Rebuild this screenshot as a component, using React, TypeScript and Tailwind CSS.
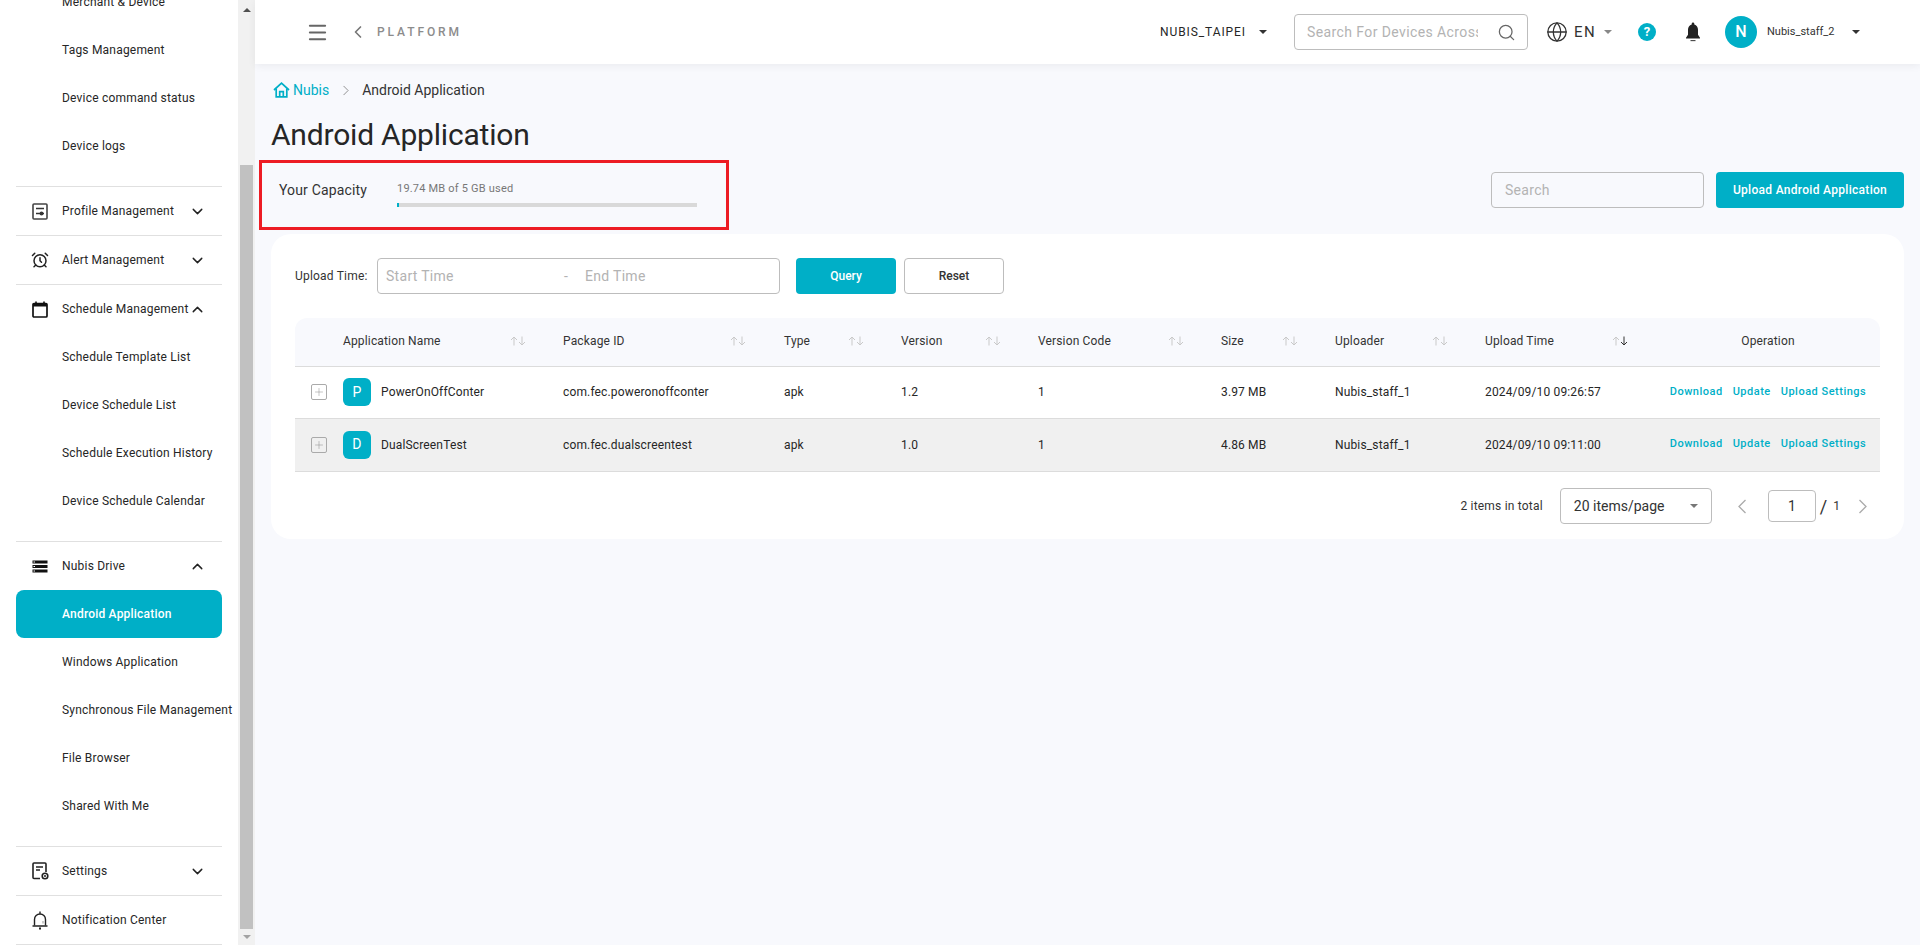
import React from "react";
import { ChevronDown, ChevronUp, AlarmClock, Search, Globe, Menu, ChevronLeft, Plus } from "lucide-react";

const IconProfile = () => (
  <svg width="16" height="17" viewBox="0 0 16 17" fill="none">
    <rect x="1" y="1" width="14" height="15" rx="1" stroke="#444" strokeWidth="1.6" />
    <path d="M4 5.5h8M4 10.5h8" stroke="#333" strokeWidth="1.3" />
    <circle cx="9.5" cy="10.5" r="1.9" fill="#333" />
  </svg>
);
const IconCalendar = () => (
  <svg width="16" height="17" viewBox="0 0 16 17" fill="none">
    <rect x="1" y="2.5" width="14" height="13.5" rx="1" stroke="#111" strokeWidth="1.7" />
    <rect x="1" y="2.5" width="14" height="3" fill="#111" />
    <path d="M4 0.5v3M12 0.5v3" stroke="#111" strokeWidth="1.6" />
  </svg>
);
const IconServer = () => (
  <svg width="16" height="13" viewBox="0 0 16 13" fill="#111">
    <rect x="0.5" y="0.5" width="15" height="3" />
    <rect x="0.5" y="5" width="15" height="3" />
    <rect x="0.5" y="9.5" width="15" height="3" />
    <path d="M1.5 2h1.5M1.5 6.5h1.5M1.5 11h1.5" stroke="#fff" strokeWidth="1" />
  </svg>
);
const IconSettingsDoc = () => (
  <svg width="17" height="18" viewBox="0 0 17 18" fill="none">
    <path d="M8 16.5H2a1 1 0 0 1-1-1V2a1 1 0 0 1 1-1h11a1 1 0 0 1 1 1v8" stroke="#222" strokeWidth="1.6" />
    <path d="M4 5h7M4 8h4" stroke="#222" strokeWidth="1.5" />
    <circle cx="13" cy="14" r="2.8" stroke="#222" strokeWidth="1.6" />
    <circle cx="13" cy="14" r="1" fill="#222" />
  </svg>
);
const IconBellOutline = () => (
  <svg width="16" height="19" viewBox="0 0 16 19" fill="none">
    <path d="M8 .5v2.2M2.5 14.5V8.5a5.5 5.5 0 0 1 11 0v6" stroke="#222" strokeWidth="1.4" />
    <path d="M.5 15h15" stroke="#222" strokeWidth="1.5" />
    <path d="M7 17.6h2" stroke="#222" strokeWidth="2" />
    <path d="M11 10v2.5" stroke="#999" strokeWidth="1" />
  </svg>
);
const IconBellFilled = () => (
  <svg width="18" height="20" viewBox="0 0 18 20" fill="#222">
    <path d="M9 .5a1.3 1.3 0 0 1 1.3 1.3v.6c2.4.7 3.7 2.8 3.7 5.3v5l2 3v.8H2v-.8l2-3v-5c0-2.5 1.3-4.6 3.7-5.3v-.6A1.3 1.3 0 0 1 9 .5Z" />
    <path d="M6.5 18.6h5" stroke="#444" strokeWidth="1.1" />
  </svg>
);
const IconHome = () => (
  <svg width="17" height="16" viewBox="0 0 17 16" fill="none" stroke="#00afc7" strokeWidth="1.7">
    <path d="M1 8 8.5 1.2 16 8" />
    <path d="M3.2 6.5v8.4h10.6V6.5" />
    <path d="M6.7 14.9V9.6h3.6v5.3" />
  </svg>
);
const Chevron = ({ dir, color }: { dir: "l" | "r"; color: string }) => (
  <svg width="10" height="15" viewBox="0 0 10 15" fill="none" stroke={color} strokeWidth="1.3">
    <path d={dir === "l" ? "M8.5 1 2 7.5 8.5 14" : "M1.5 1 8 7.5 1.5 14"} />
  </svg>
);
const SortIcon = ({ active }: { active?: boolean }) => (
  <svg width="16" height="10" viewBox="0 0 16 10" fill="none" strokeWidth="1">
    <path d="M4 9.5V1M1 4l3-3 3 3" stroke="#c9c9c9" />
    <path d="M12 .5V9M9 6l3 3 3-3" stroke={active ? "#333" : "#c9c9c9"} />
  </svg>
);
const Caret = ({ color = "#333" }: { color?: string }) => (
  <span className="inline-block w-0 h-0 border-x-[4px] border-x-transparent border-t-[4px]" style={{ borderTopColor: color }} />
);

const Sub = ({ label, active }: { label: string; active?: boolean }) => (
  <div className={`h-12 ml-4 w-[206px] flex items-center pl-[46px] whitespace-nowrap rounded-lg ${active ? "bg-[#00afc7] text-white font-medium" : "text-[#262626]"}`}>
    {label}
  </div>
);
const Group = ({ icon, label, open, arrow = true }: { icon: React.ReactNode; label: string; open?: boolean; arrow?: boolean }) => (
  <div className="h-[49px] ml-4 w-[206px] border-t border-[#e0e0e0] flex items-center text-[#262626]">
    <span className="w-[46px] flex justify-center pl-[2px]">{icon}</span>
    <span className="whitespace-nowrap w-[127px] shrink-0">{label}</span>
    {arrow && (open ? <ChevronUp size={17} strokeWidth={2} className="text-[#222]" /> : <ChevronDown size={17} strokeWidth={2} className="text-[#222]" />)}
  </div>
);

const COLS = "grid grid-cols-[48px_220px_221px_117px_137px_183px_114px_150px_171px_224px]";
const heads: [string, number][] = [
  ["Application Name", 37],
  ["Package ID", 38],
  ["Type", 37],
  ["Version", 37],
  ["Version Code", 37],
  ["Size", 37],
  ["Uploader", 37],
];
const rows = [
  { l: "P", n: "PowerOnOffConter", id: "com.fec.poweronoffconter", t: "apk", v: "1.2", c: "1", s: "3.97 MB", u: "Nubis_staff_1", d: "2024/09/10 09:26:57", bg: "bg-white", h: "h-[52px]" },
  { l: "D", n: "DualScreenTest", id: "com.fec.dualscreentest", t: "apk", v: "1.0", c: "1", s: "4.86 MB", u: "Nubis_staff_1", d: "2024/09/10 09:11:00", bg: "bg-[#f0f0f0]", h: "h-[53px]" },
];

export default function App() {
  return (
    <div className="h-[945px] w-[1920px] overflow-hidden flex bg-[#f8f9fd] font-['Roboto',sans-serif] text-[#262626]">
      {/* Sidebar */}
      <aside className="w-[255px] h-full shrink-0 flex bg-white">
        <div className="w-[238px] overflow-hidden text-[12px] tracking-[0.2px]">
          <div className="-mt-[22px]">
            <Sub label="Merchant & Device" />
            <Sub label="Tags Management" />
            <Sub label="Device command status" />
            <Sub label="Device logs" />
            <div className="h-4" />
            <Group icon={<IconProfile />} label="Profile Management" />
            <Group icon={<AlarmClock size={18} strokeWidth={2} className="text-[#222]" />} label="Alert Management" />
            <Group icon={<IconCalendar />} label="Schedule Management" open />
            <Sub label="Schedule Template List" />
            <Sub label="Device Schedule List" />
            <Sub label="Schedule Execution History" />
            <Sub label="Device Schedule Calendar" />
            <div className="h-4" />
            <Group icon={<IconServer />} label="Nubis Drive" open />
            <Sub label="Android Application" active />
            <Sub label="Windows Application" />
            <Sub label="Synchronous File Management" />
            <Sub label="File Browser" />
            <Sub label="Shared With Me" />
            <div className="h-4" />
            <Group icon={<IconSettingsDoc />} label="Settings" />
            <Group icon={<IconBellOutline />} label="Notification Center" arrow={false} />
            <div className="ml-4 w-[206px] border-t border-[#e0e0e0]" />
          </div>
        </div>
        <div className="w-[17px] h-full bg-[#f1f1f1] flex flex-col items-center">
          <div className="h-[17px] flex items-center justify-center mt-[1px]">
            <span className="w-0 h-0 border-x-[4px] border-x-transparent border-b-[4px] border-b-[#505050]" />
          </div>
          <div className="mt-[147px] w-[13px] h-[764px] bg-[#c1c1c1]" />
          <div className="h-[16px] flex items-center justify-center">
            <span className="w-0 h-0 border-x-[4px] border-x-transparent border-t-[4px] border-t-[#a3a3a3]" />
          </div>
        </div>
      </aside>

      {/* Main */}
      <div className="flex-1 min-w-0 flex flex-col">
        <header className="h-16 shrink-0 bg-white shadow-[0_2px_8px_rgba(0,0,0,0.06)] flex items-center pl-[51px] pr-[60px] z-10">
          <Menu size={23} strokeWidth={2} className="text-[#666]" />
          <ChevronLeft size={20} strokeWidth={2} className="text-[#777] ml-[19px]" />
          <span className="ml-[9px] text-[12px] tracking-[2.9px] text-[#8c8c8c] font-medium">PLATFORM</span>
          <div className="ml-auto flex items-center">
            <span className="text-[12px] text-[#262626] tracking-[0.9px]">NUBIS_TAIPEI</span>
            <span className="ml-[13px] flex"><Caret /></span>
            <div className="ml-[27px] w-[234px] h-9 border border-[#bdbdbd] rounded flex items-center pl-[12px] pr-[11px]">
              <span className="w-[171px] overflow-hidden whitespace-nowrap text-[14px] tracking-[0.4px] text-[#b3b3b3]">Search For Devices Across</span>
              <Search size={19} strokeWidth={1.6} className="ml-auto text-[#666]" />
            </div>
            <Globe size={22} strokeWidth={1.4} className="ml-[18px] text-[#333]" />
            <span className="ml-[6px] text-[15px] tracking-[1.4px] text-[#333]">EN</span>
            <span className="ml-[8px] flex"><Caret color="#888" /></span>
            <span className="ml-[26px] w-[18px] h-[18px] rounded-full bg-[#00afc7] text-white text-[13px] font-bold flex items-center justify-center">?</span>
            <span className="ml-[28px] flex"><IconBellFilled /></span>
            <span className="ml-[23px] w-8 h-8 rounded-full bg-[#00afc7] text-white text-[16px] font-medium flex items-center justify-center">N</span>
            <span className="ml-[10px] text-[11px] text-[#333] w-[69px]">Nubis_staff_2</span>
            <span className="ml-[16px] flex"><Caret /></span>
          </div>
        </header>

        <div className="pl-4 pr-4 flex flex-col">
          <nav className="mt-[16px] h-5 flex items-center text-[14px]">
            <span className="ml-[2px] flex"><IconHome /></span>
            <span className="ml-[3px] text-[#00afc7]">Nubis</span>
            <span className="ml-[12px] flex scale-[0.7]"><Chevron dir="r" color="#888" /></span>
            <span className="ml-[11px] text-[#333]">Android Application</span>
          </nav>
          <h1 className="mt-[15px] h-[40px] leading-[40px] text-[30px] tracking-[-0.2px] text-[#262626]">Android Application</h1>

          <div className="mt-[5px] flex items-start">
            <div className="-ml-3 w-[470px] h-[70px] border-[3px] border-[#ed1c24] flex items-start pl-[17px]">
              <span className="mt-[17px] w-[118px] text-[14px] tracking-[0.15px] leading-5 text-[#333]">Your Capacity</span>
              <div className="mt-[18px] w-[300px]">
                <div className="text-[11px] leading-4 text-[#777] tracking-[0.2px]">19.74 MB of 5 GB used</div>
                <div className="mt-[6px] h-1 bg-[#d9d9d9]">
                  <div className="h-full w-[2px] bg-[#00afc7]" />
                </div>
              </div>
            </div>
            <div className="ml-auto mt-3 flex">
              <div className="w-[213px] h-9 border border-[#bdbdbd] rounded flex items-center pl-[13px] text-[14px] tracking-[0.3px] text-[#b3b3b3]">Search</div>
              <div className="ml-3 w-[188px] h-9 rounded bg-[#00afc7] text-white text-[12px] font-medium tracking-[0.3px] flex items-center justify-center">Upload Android Application</div>
            </div>
          </div>

          <section className="mt-[4px] w-[1633px] h-[305px] bg-white rounded-[20px] px-6 pt-6">
            <div className="flex items-center h-9">
              <span className="w-[82px] text-[12px] tracking-[0.2px] text-[#333]">Upload Time:</span>
              <div className="w-[403px] h-9 border border-[#bdbdbd] rounded flex items-center pl-[8px] text-[14px] tracking-[0.3px] text-[#b3b3b3]">
                <span className="w-[178px]">Start Time</span>
                <span className="w-[21px]">-</span>
                <span>End Time</span>
              </div>
              <div className="ml-4 w-[100px] h-9 rounded bg-[#00afc7] text-white text-[12px] font-medium flex items-center justify-center">Query</div>
              <div className="ml-2 w-[100px] h-9 rounded border border-[#bdbdbd] bg-white text-[#333] text-[12px] font-medium flex items-center justify-center">Reset</div>
            </div>

            <div className="mt-6 text-[12px] tracking-[0.15px] w-[1585px]">
              <div className={`${COLS} h-[49px] pb-[2px] items-center bg-[#f8f9fd] rounded-t-xl border-b border-[#dcdcdc] text-[#333]`}>
                <div />
                {heads.map(([h, pr]) => (
                  <div key={h} className="flex items-center justify-between whitespace-nowrap" style={{ paddingRight: pr }}>
                    {h}
                    <SortIcon />
                  </div>
                ))}
                <div className="flex items-center justify-between whitespace-nowrap pr-[28px]">
                  Upload Time
                  <SortIcon active />
                </div>
                <div className="text-center">Operation</div>
              </div>
              {rows.map((r) => (
                <div key={r.n} className={`${COLS} ${r.h} pb-[1px] ${r.bg} items-center border-b border-[#dcdcdc] text-[#262626]`}>
                  <div className="pl-4">
                    <span className="w-4 h-4 border border-[#aaa] rounded-[2px] flex items-center justify-center">
                      <Plus size={12} strokeWidth={1} className="text-[#888]" />
                    </span>
                  </div>
                  <div className="flex items-center">
                    <span className="w-7 h-7 rounded-md bg-[#00afc7] text-white text-[14px] flex items-center justify-center">{r.l}</span>
                    <span className="ml-[10px]">{r.n}</span>
                  </div>
                  <div>{r.id}</div>
                  <div>{r.t}</div>
                  <div>{r.v}</div>
                  <div>{r.c}</div>
                  <div>{r.s}</div>
                  <div>{r.u}</div>
                  <div>{r.d}</div>
                  <div className="flex justify-center gap-[10px] text-[11px] font-medium tracking-[0.5px] text-[#00afc7] whitespace-nowrap">
                    <span>Download</span>
                    <span>Update</span>
                    <span>Upload Settings</span>
                  </div>
                </div>
              ))}
            </div>

            <div className="mt-4 w-[1585px] flex items-center h-9 text-[12px]">
              <span className="ml-auto text-[#333] tracking-[0.2px]">2 items in total</span>
              <div className="ml-[17px] w-[152px] h-9 border border-[#bdbdbd] rounded flex items-center px-[13px] text-[14px] text-[#333]">
                20 items/page
                <span className="ml-auto flex"><Caret color="#777" /></span>
              </div>
              <span className="ml-[25px] flex"><Chevron dir="l" color="#aaa" /></span>
              <div className="ml-[21px] w-12 h-8 border border-[#bdbdbd] rounded flex items-center justify-center text-[14px] text-[#333]">1</div>
              <span className="ml-1 text-[18px] text-[#333]">/</span>
              <span className="ml-[6px] text-[#333]">1</span>
              <span className="ml-[18px] mr-[12px] flex"><Chevron dir="r" color="#aaa" /></span>
            </div>
          </section>
        </div>
      </div>
    </div>
  );
}
